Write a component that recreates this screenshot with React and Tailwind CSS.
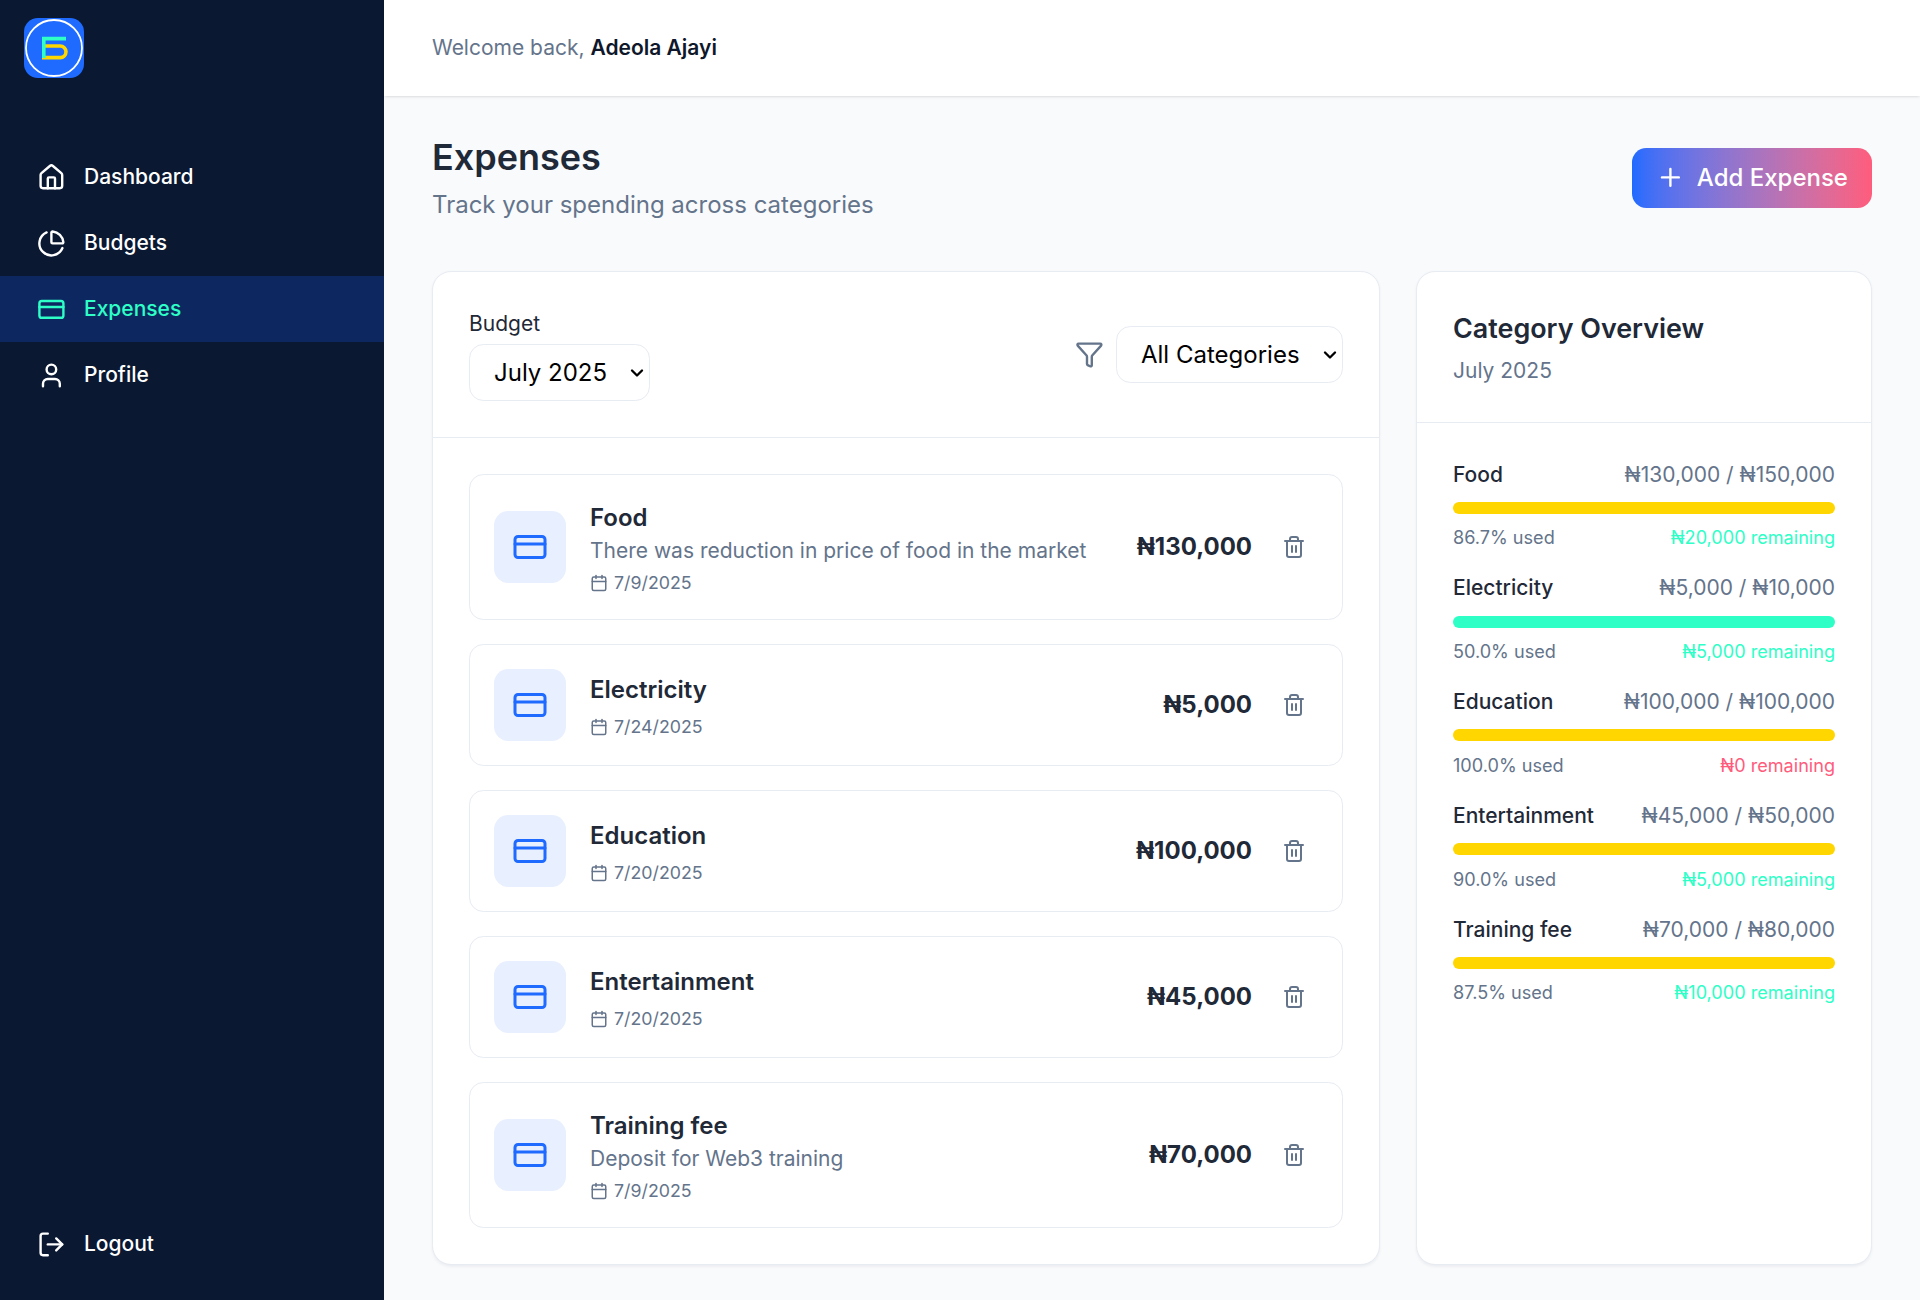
import React from 'react';
import { House, ChartPie, CreditCard, User, LogOut, Funnel, Trash2, Calendar, Plus, ChevronDown } from 'lucide-react';

const navItems = [
  { label: 'Dashboard', icon: House },
  { label: 'Budgets', icon: ChartPie },
  { label: 'Expenses', icon: CreditCard, active: true },
  { label: 'Profile', icon: User },
];

const expenses = [
  { id: 1, name: 'Food', note: 'There was reduction in price of food in the market', date: '7/9/2025', amount: '₦130,000' },
  { id: 2, name: 'Electricity', date: '7/24/2025', amount: '₦5,000' },
  { id: 3, name: 'Education', date: '7/20/2025', amount: '₦100,000' },
  { id: 4, name: 'Entertainment', date: '7/20/2025', amount: '₦45,000' },
  { id: 5, name: 'Training fee', note: 'Deposit for Web3 training', date: '7/9/2025', amount: '₦70,000' },
];

const categories = [
  { name: 'Food', spent: '₦130,000 / ₦150,000', used: '86.7% used', left: '₦20,000 remaining', bar: 'bg-[#ffd600]', leftColor: 'text-[#2effc7]' },
  { name: 'Electricity', spent: '₦5,000 / ₦10,000', used: '50.0% used', left: '₦5,000 remaining', bar: 'bg-[#2effc7]', leftColor: 'text-[#2effc7]' },
  { name: 'Education', spent: '₦100,000 / ₦100,000', used: '100.0% used', left: '₦0 remaining', bar: 'bg-[#ffd600]', leftColor: 'text-[#ff5c7c]' },
  { name: 'Entertainment', spent: '₦45,000 / ₦50,000', used: '90.0% used', left: '₦5,000 remaining', bar: 'bg-[#ffd600]', leftColor: 'text-[#2effc7]' },
  { name: 'Training fee', spent: '₦70,000 / ₦80,000', used: '87.5% used', left: '₦10,000 remaining', bar: 'bg-[#ffd600]', leftColor: 'text-[#2effc7]' },
];

function Logo() {
  return (
    <svg width="60" height="60" viewBox="0 0 60 60" fill="none">
      <rect width="60" height="60" rx="14" fill="#1f6bff" />
      <circle cx="30" cy="30" r="28" stroke="#fff" strokeWidth="1.8" />
      <path d="M20 28H36.2a5.8 5.8 0 0 1 0 11.6H18" stroke="#ffd600" strokeWidth="3.6" />
      <path d="M42 20.6H19.8V40" stroke="#2effc7" strokeWidth="3.6" />
    </svg>
  );
}

function SelectBox({ value, width }) {
  return (
    <div className={`relative h-[57px] ${width}`}>
      <select className="appearance-none w-full h-full pl-[24px] border border-[#e7ebf2] rounded-[14.4px] text-[24px] text-black">
        <option>{value}</option>
      </select>
      <ChevronDown size={20} strokeWidth={2.8} className="absolute right-[3.5px] top-[18.5px] text-black pointer-events-none" />
    </div>
  );
}

function Sidebar() {
  return (
    <aside className="w-[384px] shrink-0 h-full bg-[#0a1832] flex flex-col">
      <div className="pl-[24px] pt-[18px] h-[144px]">
        <Logo />
      </div>
      <nav className="flex-1">
        {navItems.map((item) => {
          const Icon = item.icon;
          return (
            <a
              key={item.label}
              className={`h-[66px] pl-[36.5px] flex items-center gap-[18.7px] text-[21px] font-medium ${
                item.active ? 'bg-[#0d2860] text-[#2effc7]' : 'text-white'
              }`}
            >
              <Icon size={28.8} />
              {item.label}
            </a>
          );
        })}
      </nav>
      <a className="h-[66px] mb-[23px] pl-[36.5px] flex items-center gap-[18.7px] text-[21px] font-medium text-white">
        <LogOut size={28.8} />
        Logout
      </a>
    </aside>
  );
}

function ExpenseRow({ expense }) {
  return (
    <div className="flex items-center border border-[#e7ebf2] rounded-[14.4px] p-[24px]">
      <div className="w-[72px] h-[72px] shrink-0 rounded-[14.4px] bg-[#e8effe] flex items-center justify-center text-[#1f6bff]">
        <CreditCard size={36} />
      </div>
      <div className="flex-1 ml-[24px]">
        <div className="pt-[1px] -mb-[1px] text-[24px] leading-[36px] font-semibold text-[#1f2937]">{expense.name}</div>
        {expense.note && <div className="pt-[2px] -mb-[2px] text-[21px] leading-[28px] text-[#64748b]">{expense.note}</div>}
        <div className="mt-[8px] flex items-center gap-[6px] text-[17.8px] leading-[24px] text-[#64748b]">
          <Calendar size={18} />
          {expense.date}
        </div>
      </div>
      <div className="text-[24px] font-bold text-[#1f2937]">{expense.amount}</div>
      <button className="ml-[18px] p-[12px] text-[#64748b]">
        <Trash2 size={24} />
      </button>
    </div>
  );
}

function CategoryRow({ category }) {
  return (
    <div>
      <div className="flex justify-between items-center h-[28.8px] text-[21px]">
        <span className="font-medium text-[#1f2937]">{category.name}</span>
        <span className="text-[#64748b]">{category.spent}</span>
      </div>
      <div className={`h-[12px] mt-[13px] rounded-full ${category.bar}`} />
      <div className="flex justify-between items-center h-[24px] mt-[12px] text-[18.1px]">
        <span className="text-[#64748b]">{category.used}</span>
        <span className={category.leftColor}>{category.left}</span>
      </div>
    </div>
  );
}

export default function App() {
  return (
    <div className="h-[1300px] flex font-['Inter',sans-serif] bg-[#f8fafc]">
      <Sidebar />
      <div className="flex-1 flex flex-col min-w-0">
        <header className="h-[96px] shrink-0 bg-white shadow-[0_1.2px_3.6px_rgba(0,0,0,0.1),0_1.2px_2.4px_-1.2px_rgba(0,0,0,0.1)] flex items-center px-[48px] text-[21px] text-[#64748b]">
          Welcome back,&nbsp;<span className="font-semibold text-[#0f172a]">Adeola Ajayi</span>
        </header>
        <main className="flex-1 flex flex-col min-h-0 pt-[36px] px-[48px] pb-[35px]">
          <div className="flex justify-between items-center mb-[48px]">
            <div>
              <h1 className="text-[36px] leading-[50px] font-semibold text-[#1f2937]">Expenses</h1>
              <p className="text-[24px] leading-[36px] mt-[5px] text-[#64748b]">Track your spending across categories</p>
            </div>
            <button className="w-[240px] h-[60px] rounded-[14.4px] flex items-center justify-center gap-[12px] text-[24px] font-medium text-white bg-gradient-to-r from-[#1f6bff] to-[#ff5c7c]">
              <Plus size={28.8} />
              Add Expense
            </button>
          </div>
          <div className="flex-1 grid grid-cols-3 gap-[36px] min-h-0">
            <section className="col-span-2 bg-white border border-[#e7ebf2] rounded-[19.2px] shadow-[0_1.2px_3px_rgba(15,23,42,0.05)]">
              <div className="flex justify-between items-center p-[36px] border-b border-[#e7ebf2]">
                <div>
                  <label className="block text-[21px] leading-[32px] mb-[4px] text-[#1f2937]">Budget</label>
                  <SelectBox value="July 2025" width="w-[181px]" />
                </div>
                <div className="flex items-center gap-[12.5px]">
                  <Funnel size={28.8} className="text-[#64748b]" />
                  <SelectBox value="All Categories" width="w-[227px]" />
                </div>
              </div>
              <div className="p-[36px] flex flex-col gap-[24px]">
                {expenses.map((expense) => (
                  <ExpenseRow key={expense.id} expense={expense} />
                ))}
              </div>
            </section>
            <section className="bg-white border border-[#e7ebf2] rounded-[19.2px] shadow-[0_1.2px_3px_rgba(15,23,42,0.05)]">
              <div className="p-[36px] border-b border-[#e7ebf2]">
                <h2 className="text-[26.9px] leading-[40px] font-semibold text-[#1f2937]">Category Overview</h2>
                <p className="text-[21px] leading-[30px] mt-[8px] text-[#64748b]">July 2025</p>
              </div>
              <div className="px-[36px] pt-[37px] flex flex-col gap-[24px]">
                {categories.map((category) => (
                  <CategoryRow key={category.name} category={category} />
                ))}
              </div>
            </section>
          </div>
        </main>
      </div>
    </div>
  );
}
